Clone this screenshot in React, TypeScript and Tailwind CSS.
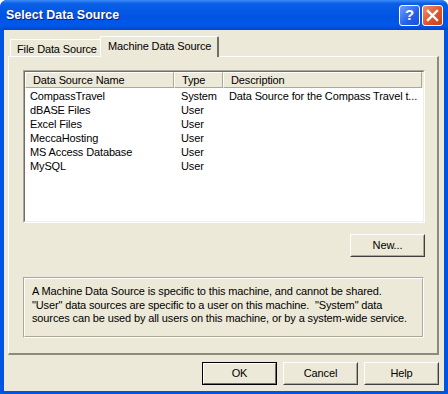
import { useState } from "react";

const rows = [
  { name: "CompassTravel", type: "System", desc: "Data Source for the Compass Travel t..." },
  { name: "dBASE Files", type: "User", desc: "" },
  { name: "Excel Files", type: "User", desc: "" },
  { name: "MeccaHosting", type: "User", desc: "" },
  { name: "MS Access Database", type: "User", desc: "" },
  { name: "MySQL", type: "User", desc: "" },
];

function Button({ label, isDefault = false }: { label: string; isDefault?: boolean }) {
  return (
    <div
      className={
        isDefault
          ? "h-[23px] w-[75px] border border-black"
          : "h-[23px] w-[75px] border border-t-white border-l-white border-r-[#404040] border-b-[#404040]"
      }
    >
      <div
        className={
          isDefault
            ? "flex h-full w-full items-center justify-center border border-t-white border-l-white border-r-[#716f64] border-b-[#716f64] bg-[#ece9d8]"
            : "flex h-full w-full items-center justify-center border border-t-[#ece9d8] border-l-[#ece9d8] border-r-[#aca899] border-b-[#aca899] bg-[#ece9d8]"
        }
      >
        {label}
      </div>
    </div>
  );
}

function HeaderCell({ label, width }: { label: string; width: string }) {
  return (
    <div
      className={`${width} flex h-[16px] items-center border border-t-white border-l-white border-r-[#aca899] border-b-[#aca899] pl-[7px]`}
    >
      {label}
    </div>
  );
}

export default function App() {
  const [tab] = useState("machine");

  return (
    <div
      className="flex h-[394px] w-[448px] flex-col overflow-hidden rounded-t-[7px] bg-[#0054e3] text-[11px] tracking-[-0.13px] text-black"
      style={{ fontFamily: '"Liberation Sans", Arial, sans-serif' }}
    >
      {/* title bar */}
      <div className="flex h-[30px] items-center justify-between bg-[linear-gradient(to_bottom,#3a8cf9_0%,#0a5fe6_12%,#0054e3_55%,#0058ea_85%,#0046cc_100%)] pl-[6px] pr-[5px]">
        <span className="text-[12.5px] font-bold tracking-normal text-white [text-shadow:1px_1px_0_#0a1e6e]">
          Select Data Source
        </span>
        <div className="flex gap-[2px] pt-[1px]">
          <div className="flex h-[21px] w-[21px] items-center justify-center rounded-[3px] border border-white bg-[linear-gradient(135deg,#6f9ffb,#2660e8_60%,#1b4fd8)] text-[15px] font-bold text-white">
            ?
          </div>
          <div className="flex h-[21px] w-[21px] items-center justify-center rounded-[3px] border border-white bg-[linear-gradient(135deg,#f0916e,#e2532a_55%,#c8401a)]">
            <svg width="13" height="13" viewBox="0 0 13 13">
              <path d="M2 2 L11 11 M11 2 L2 11" stroke="white" strokeWidth="2.4" strokeLinecap="square" />
            </svg>
          </div>
        </div>
      </div>

      {/* client area */}
      <div className="mx-[4px] mb-[3px] flex flex-1 flex-col bg-[#ece9d8]">
        {/* tabs */}
        <div className="ml-[6px] mt-[6px] flex items-end">
          <div
            className={
              tab === "file"
                ? "h-[21px] px-[6px]"
                : "flex h-[17px] w-[90px] items-center border-l border-t border-l-white border-t-white pl-[6px] pt-[2px]"
            }
          >
            File Data Source
          </div>
          <div className="relative -mb-px flex h-[21px] w-[119px] items-center rounded-tr-[2px] border-l border-t border-r-2 border-l-white border-t-white border-r-[#716f64] bg-[#ece9d8] pb-[2px] pl-[7px]">
            Machine Data Source
          </div>
        </div>

        {/* panel */}
        <div className="ml-[4px] flex h-[299px] w-[431px] flex-col border-l border-t border-l-white border-t-white border-r-2 border-b-2 border-r-[#8c8a7c] border-b-[#8c8a7c] pl-[14px] pt-[13px]">
          {/* list view */}
          <div className="h-[153px] w-[402px] border border-t-[#aca899] border-l-[#aca899] border-r-white border-b-white">
            <div className="flex h-full w-full flex-col border border-t-[#716f64] border-l-[#716f64] border-r-[#f1efe2] border-b-[#f1efe2] bg-white">
              <div className="flex bg-[#ece9d8]">
                <HeaderCell label="Data Source Name" width="w-[149px]" />
                <HeaderCell label="Type" width="w-[49px]" />
                <HeaderCell label="Description" width="w-[199px]" />
              </div>
              <div className="flex flex-col pt-px">
                {rows.map((r) => (
                  <div key={r.name} className="flex h-[14px] items-center leading-[14px]">
                    <div className="w-[156px] pl-[5px]">{r.name}</div>
                    <div className="w-[48px]">{r.type}</div>
                    <div className="flex-1">{r.desc}</div>
                  </div>
                ))}
              </div>
            </div>
          </div>

          {/* new button */}
          <div className="mt-[11px] flex w-[402px] justify-end">
            <Button label="New..." />
          </div>

          {/* info box */}
          <div className="mt-[20px] h-[61px] w-[401px] border border-t-[#aca899] border-l-[#aca899] border-r-white border-b-white">
            <div className="h-full w-full border border-t-white border-l-white border-r-[#aca899] border-b-[#aca899] pl-[7px] pt-[6px] leading-[13.5px]">
              <p>A Machine Data Source is specific to this machine, and cannot be shared.</p>
              <p>"User" data sources are specific to a user on this machine. &nbsp;"System" data</p>
              <p>sources can be used by all users on this machine, or by a system-wide service.</p>
            </div>
          </div>
        </div>

        {/* dialog buttons */}
        <div className="mt-[7px] flex justify-end gap-[6px] pr-[5px]">
          <Button label="OK" isDefault />
          <Button label="Cancel" />
          <Button label="Help" />
        </div>
      </div>
    </div>
  );
}
